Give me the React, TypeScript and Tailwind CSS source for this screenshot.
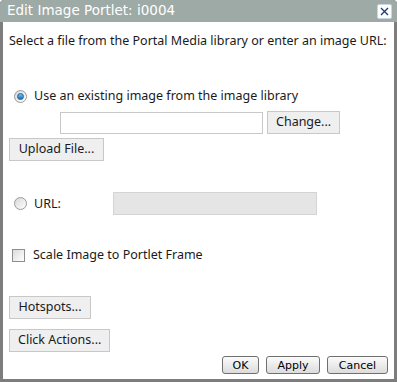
import type React from 'react';

function GrayButton({ label, className }: { label: string; className?: string }): React.ReactElement {
  return (
    <button
      type="button"
      className={`h-[23px] whitespace-nowrap border border-[#c8c8c8] bg-[#efefef] px-[8px] text-[12.5px] leading-none text-[#1a1a1a] ${className ?? ''}`}
    >
      {label}
    </button>
  );
}

function DialogButton({ label, className }: { label: string; className?: string }): React.ReactElement {
  return (
    <button
      type="button"
      className={`h-[18px] whitespace-nowrap rounded-[3px] border border-[#707070] bg-gradient-to-b from-[#fbfbfb] to-[#dcdcdc] text-[11px] leading-none text-black ${className ?? ''}`}
      style={{ fontFamily: '"DejaVu Sans", Verdana, sans-serif' }}
    >
      {label}
    </button>
  );
}

function Radio({ checked }: { checked?: boolean }): React.ReactElement {
  return (
    <span className="flex h-[13px] w-[13px] shrink-0 items-center justify-center rounded-full border border-[#9a9a9a] bg-gradient-to-br from-[#d8d8d8] to-[#ffffff]">
      {checked && (
        <span className="h-[7px] w-[7px] rounded-full border border-[#1d5f8f] bg-gradient-to-b from-[#6fc3f2] to-[#1f6fb0]" />
      )}
    </span>
  );
}

export default function App(): React.ReactElement {
  return (
    <div
      className="flex h-[382px] w-[397px] flex-col overflow-hidden rounded-t-[4px] bg-[#7d7d7d] px-[3px] pb-[3px]"
      style={{ fontFamily: '"Noto Sans", "Open Sans", sans-serif' }}
    >
      {/* Title bar */}
      <div className="-mx-[3px] flex h-[22px] shrink-0 items-center justify-between rounded-t-[4px] bg-[#9eaaa6] pl-[7px] pr-[5px]">
        <span
          className="whitespace-nowrap text-[13.5px] leading-none text-white"
          style={{ fontFamily: '"DejaVu Sans", Verdana, sans-serif' }}
        >
          Edit Image Portlet: i0004
        </span>
        <span className="flex h-[15px] w-[15px] items-center justify-center rounded-[2px] border border-[#c9d6e8] bg-white">
          <svg width="9" height="9" viewBox="0 0 9 9">
            <path d="M1 1L8 8M8 1L1 8" stroke="#1d3d7a" strokeWidth="1.4" />
          </svg>
        </span>
      </div>

      {/* Body */}
      <div className="flex flex-1 flex-col bg-white pl-[6px] pr-[6px] text-[12.5px] text-[#1a1a1a]">
        <p className="mt-[10px] whitespace-nowrap leading-[18px]">
          Select a file from the Portal Media library or enter an image URL:
        </p>

        <div className="mt-[37px] flex h-[18px] items-center gap-[7px] pl-[5px]">
          <Radio checked />
          <span className="whitespace-nowrap leading-[18px]">Use an existing image from the image library</span>
        </div>

        <div className="mt-[6px] flex items-center gap-[4px] pl-[51px]">
          <input className="h-[22px] w-[203px] border border-[#c8c8c8] bg-white outline-none" />
          <GrayButton label="Change..." className="h-[22px] w-[73px]" />
        </div>

        <div className="mt-[4px] flex">
          <GrayButton label="Upload File..." className="w-[95px]" />
        </div>

        <div className="mt-[31px] flex h-[23px] items-center pl-[5px]">
          <Radio />
          <span className="ml-[7px] leading-[18px]">URL:</span>
          <div className="ml-[52px] h-[23px] w-[204px] border border-[#d4d4d4] bg-[#e5e5e5]" />
        </div>

        <div className="mt-[31px] flex h-[18px] items-center gap-[8px] pl-[3px]">
          <span className="h-[13px] w-[13px] shrink-0 border border-[#8e8e8e] bg-gradient-to-br from-[#dcdcdc] to-white" />
          <span className="whitespace-nowrap leading-[18px]">Scale Image to Portlet Frame</span>
        </div>

        <div className="mt-[32px] flex">
          <GrayButton label="Hotspots..." className="w-[82px]" />
        </div>

        <div className="mt-[10px] flex">
          <GrayButton label="Click Actions..." className="w-[101px]" />
        </div>

        <div className="mt-[4px] flex justify-end gap-[7px]">
          <DialogButton label="OK" className="w-[37px]" />
          <DialogButton label="Apply" className="w-[54px]" />
          <DialogButton label="Cancel" className="w-[61px]" />
        </div>
      </div>
    </div>
  );
}
